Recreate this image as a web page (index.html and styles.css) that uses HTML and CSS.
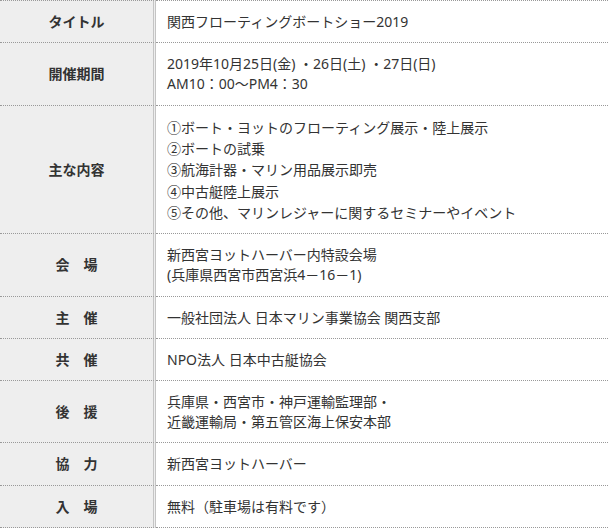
FILE: index.html
```html
<!DOCTYPE html>
<html lang="ja">
<head>
<meta charset="utf-8">
<link rel="stylesheet" href="styles.css">
</head>
<body>
<table class="info">
  <tr><th>タイトル</th><td>関西フローティングボートショー2019</td></tr>
  <tr><th>開催期間</th><td>2019年10月25日(金) ・26日(土) ・27日(日)<br>AM10：00～PM4：30</td></tr>
  <tr><th>主な内容</th><td class="list">①ボート・ヨットのフローティング展示・陸上展示<br>②ボートの試乗<br>③航海計器・マリン用品展示即売<br>④中古艇陸上展示<br>⑤その他、マリンレジャーに関するセミナーやイベント</td></tr>
  <tr><th>会　場</th><td>新西宮ヨットハーバー内特設会場<br>(兵庫県西宮市西宮浜4－16－1)</td></tr>
  <tr><th>主　催</th><td>一般社団法人 日本マリン事業協会 関西支部</td></tr>
  <tr><th>共　催</th><td>NPO法人 日本中古艇協会</td></tr>
  <tr><th>後　援</th><td>兵庫県・西宮市・神戸運輸監理部・<br>近畿運輸局・第五管区海上保安本部</td></tr>
  <tr><th>協　力</th><td>新西宮ヨットハーバー</td></tr>
  <tr><th>入　場</th><td>無料（駐車場は有料です）</td></tr>
</table>
</body>
</html>
```

FILE: styles.css
```css
html, body {
  margin: 0;
  padding: 0;
  background: #fff;
}
body {
  font-family: "Noto Sans", "Noto Sans CJK JP", sans-serif;
  font-size: 14px;
  color: #333;
}
.info {
  width: 608px;
  border-collapse: separate;
  border-spacing: 0;
}
.info th,
.info td {
  border-bottom: 1px dotted #999;
  line-height: 20.2px;
  padding: 11px 11px 10px;
}
.info tr:first-child th,
.info tr:first-child td {
  border-top: 1px dotted #999;
}
.info th {
  width: 131px;
  background: #eeeeee;
  border-right: 3px double #c4c4c4;
  font-weight: bold;
  text-align: center;
  vertical-align: middle;
  color: #333;
}
.info td {
  text-align: left;
  vertical-align: middle;
}
.info td.list {
  line-height: 21.3px;
}
```
